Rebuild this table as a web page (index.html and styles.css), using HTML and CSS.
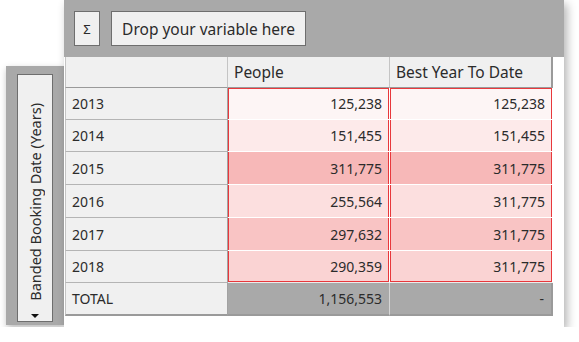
FILE: index.html
```html
<!DOCTYPE html>
<html>
<head>
<meta charset="utf-8">
<link rel="stylesheet" href="styles.css">
</head>
<body>
<div class="wrap">
  <div class="rowpanel">
    <div class="rowbtn">
      <span class="vtext">Banded Booking Date (Years)</span>
      <span class="tri"></span>
    </div>
  </div>
  <div class="card">
    <div class="topbar">
      <div class="btn sigma">Σ</div>
      <div class="btn drop">Drop your variable here</div>
    </div>
    <div class="grid">
      <div class="c hd first"></div>
      <div class="c hd">People</div>
      <div class="c hd last">Best Year To Date</div>

      <div class="c yr">2013</div>
      <div class="c d r1 top">125,238</div>
      <div class="c d r1 top">125,238</div>

      <div class="c yr">2014</div>
      <div class="c d r2">151,455</div>
      <div class="c d r2">151,455</div>

      <div class="c yr">2015</div>
      <div class="c d r3">311,775</div>
      <div class="c d r3">311,775</div>

      <div class="c yr">2016</div>
      <div class="c d r4">255,564</div>
      <div class="c d r4">311,775</div>

      <div class="c yr">2017</div>
      <div class="c d r5">297,632</div>
      <div class="c d r5">311,775</div>

      <div class="c yr">2018</div>
      <div class="c d r6 bot">290,359</div>
      <div class="c d r6 bot">311,775</div>

      <div class="c yr tot">TOTAL</div>
      <div class="c t">1,156,553</div>
      <div class="c t">-</div>
    </div>
  </div>
</div>
</body>
</html>
```

FILE: styles.css
```css
html, body {
  margin: 0;
  padding: 0;
  background: #ffffff;
}
body {
  font-family: "Noto Sans", "Open Sans", sans-serif;
  font-size: 14px;
  color: #2b2b2b;
}
.wrap {
  display: flex;
  align-items: flex-start;
  padding-left: 6px;
}
.rowpanel {
  margin-top: 66px;
  width: 58px;
  height: 259px;
  box-sizing: border-box;
  background: #a9a9a9;
  padding: 8px 11px 3px 11px;
  box-shadow: 1px 3px 7px rgba(0,0,0,0.28);
}
.rowbtn {
  height: 100%;
  box-sizing: border-box;
  background: #f0f0f0;
  border: 1px solid #6e6e6e;
  display: flex;
  flex-direction: column;
  align-items: center;
  justify-content: flex-end;
  padding-bottom: 3px;
}
.vtext {
  writing-mode: vertical-rl;
  transform: rotate(180deg);
  white-space: nowrap;
  line-height: 20px;
  font-size: 14.5px;
  margin-bottom: 13px;
}
.tri {
  width: 0;
  height: 0;
  border-left: 4px solid transparent;
  border-right: 4px solid transparent;
  border-top: 4px solid #111;
}
.card {
  width: 500px;
  height: 327px;
  background: #ffffff;
  box-shadow: 3px 4px 9px rgba(0,0,0,0.3);
  display: flex;
  flex-direction: column;
}
.topbar {
  height: 57px;
  box-sizing: border-box;
  background: #a9a9a9;
  display: flex;
  gap: 11px;
  padding: 11px 0 0 10px;
}
.btn {
  height: 35px;
  box-sizing: border-box;
  background: #f0f0f0;
  border: 1px solid #6e6e6e;
  display: flex;
  align-items: center;
  justify-content: center;
}
.sigma {
  width: 26px;
  font-size: 13px;
}
.drop {
  width: 195px;
  font-size: 15.5px;
}
.grid {
  display: grid;
  grid-template-columns: 163px 162px 163px;
  grid-template-rows: 31px 32px 32px 33px 33px 33px 32px 33px;
  margin-left: 1px;
  width: 488px;
}
.c {
  box-sizing: border-box;
  display: flex;
  align-items: center;
  white-space: nowrap;
}
.hd {
  background: #f0f0f0;
  border-right: 1px solid #c4c4c4;
  border-bottom: 1px solid #9a9a9a;
  padding-left: 6px;
  font-size: 15.5px;
}
.hd.first {
  border-left: 1px solid #c4c4c4;
  border-right: 1px solid #c4c4c4;
}
.hd.last {
  border-right: 2px solid #9a9a9a;
}
.yr {
  background: #f0f0f0;
  border-left: 1px solid #c4c4c4;
  border-right: 1px solid #a2a2a2;
  border-bottom: 1px solid #b4b4b4;
  padding-left: 6px;
}
.yr.tot {
  border-bottom: 2px solid #9a9a9a;
}
.d {
  justify-content: flex-end;
  padding-right: 7px;
  border-right: 1px solid #ffffff;
  border-bottom: 1px solid #ffffff;
  box-shadow: inset 1px 0 #e8383c, inset -1px 0 #e8383c;
}
.d.top {
  box-shadow: inset 1px 0 #e8383c, inset -1px 0 #e8383c, inset 0 1px #e8383c;
}
.d.bot {
  border-bottom-color: #ececec;
  box-shadow: inset 1px 0 #e8383c, inset -1px 0 #e8383c, inset 0 -1px #e8383c;
}
.r1 { background: #fdf5f5; }
.r2 { background: #fdeaea; }
.r3 { background: #f7b8b8; }
.r4 { background: #fcdfdf; }
.r5 { background: #f9c4c4; }
.r6 { background: #fad3d3; }
.t {
  background: #a9a9a9;
  justify-content: flex-end;
  padding-right: 7px;
  border-right: 1px solid #d6d6d6;
  border-bottom: 2px solid #9a9a9a;
}
.t:last-child {
  border-right: 2px solid #9a9a9a;
}
```
